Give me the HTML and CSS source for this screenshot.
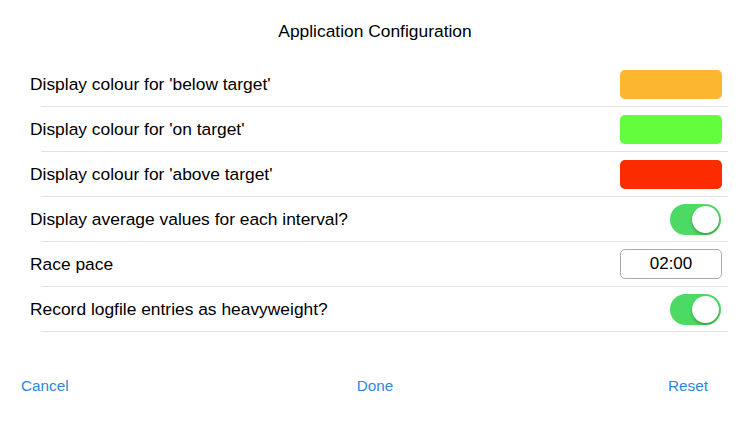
FILE: index.html
```html
<!DOCTYPE html>
<html>
<head>
<meta charset="utf-8">
<link rel="stylesheet" href="styles.css">
</head>
<body>
<div class="page">
  <header class="title">Application Configuration</header>
  <div class="list">
    <div class="row"><span class="label">Display colour for 'below target'</span><span class="swatch orange"></span></div>
    <div class="row"><span class="label">Display colour for 'on target'</span><span class="swatch green"></span></div>
    <div class="row"><span class="label">Display colour for 'above target'</span><span class="swatch red"></span></div>
    <div class="row"><span class="label">Display average values for each interval?</span><span class="toggle"><span class="knob"></span></span></div>
    <div class="row"><span class="label">Race pace</span><span class="field">02:00</span></div>
    <div class="row"><span class="label">Record logfile entries as heavyweight?</span><span class="toggle"><span class="knob"></span></span></div>
  </div>
  <footer class="actions">
    <span class="btn left">Cancel</span>
    <span class="btn">Done</span>
    <span class="btn right">Reset</span>
  </footer>
</div>
</body>
</html>
```
FILE: styles.css
```css
html, body { margin: 0; padding: 0; background: #fff; }
body { font-family: "Liberation Sans", Arial, sans-serif; color: #000; width: 750px; height: 422px; overflow: hidden; }
.page { display: flex; flex-direction: column; }
.title { height: 62px; display: flex; align-items: center; justify-content: center; font-size: 17.4px; box-sizing: border-box; }
.list { display: flex; flex-direction: column; }
.row { height: 44px; display: flex; align-items: center; justify-content: space-between; padding-left: 30px; padding-right: 28px; margin-bottom: 1px; position: relative; }
.row::after { content: ""; position: absolute; left: 41px; right: 22px; bottom: -1px; height: 1px; background: #e3e3e5; }
.label { font-size: 17.4px; }
.swatch { width: 102px; height: 29px; border-radius: 5px; }
.orange { background: #fdb62f; }
.green { background: #64fd3e; }
.red { background: #fc2b00; }
.toggle { width: 51px; height: 31px; border-radius: 16px; background: #4cd964; position: relative; margin-right: 1px; }
.knob { position: absolute; right: 2px; top: 2px; width: 27px; height: 27px; border-radius: 50%; background: #fff; box-shadow: 0 2px 3px rgba(0,0,0,0.25); }
.field { width: 100px; height: 28px; border: 1px solid #a9a9a9; border-radius: 5px; display: flex; align-items: center; justify-content: center; font-size: 17px; }
.actions { display: grid; grid-template-columns: 1fr auto 1fr; padding: 45px 21px 0 21px; }
.btn { color: #2e86de; font-size: 15.3px; }
.left { justify-self: start; }
.right { justify-self: end; margin-right: 21px; }
```
